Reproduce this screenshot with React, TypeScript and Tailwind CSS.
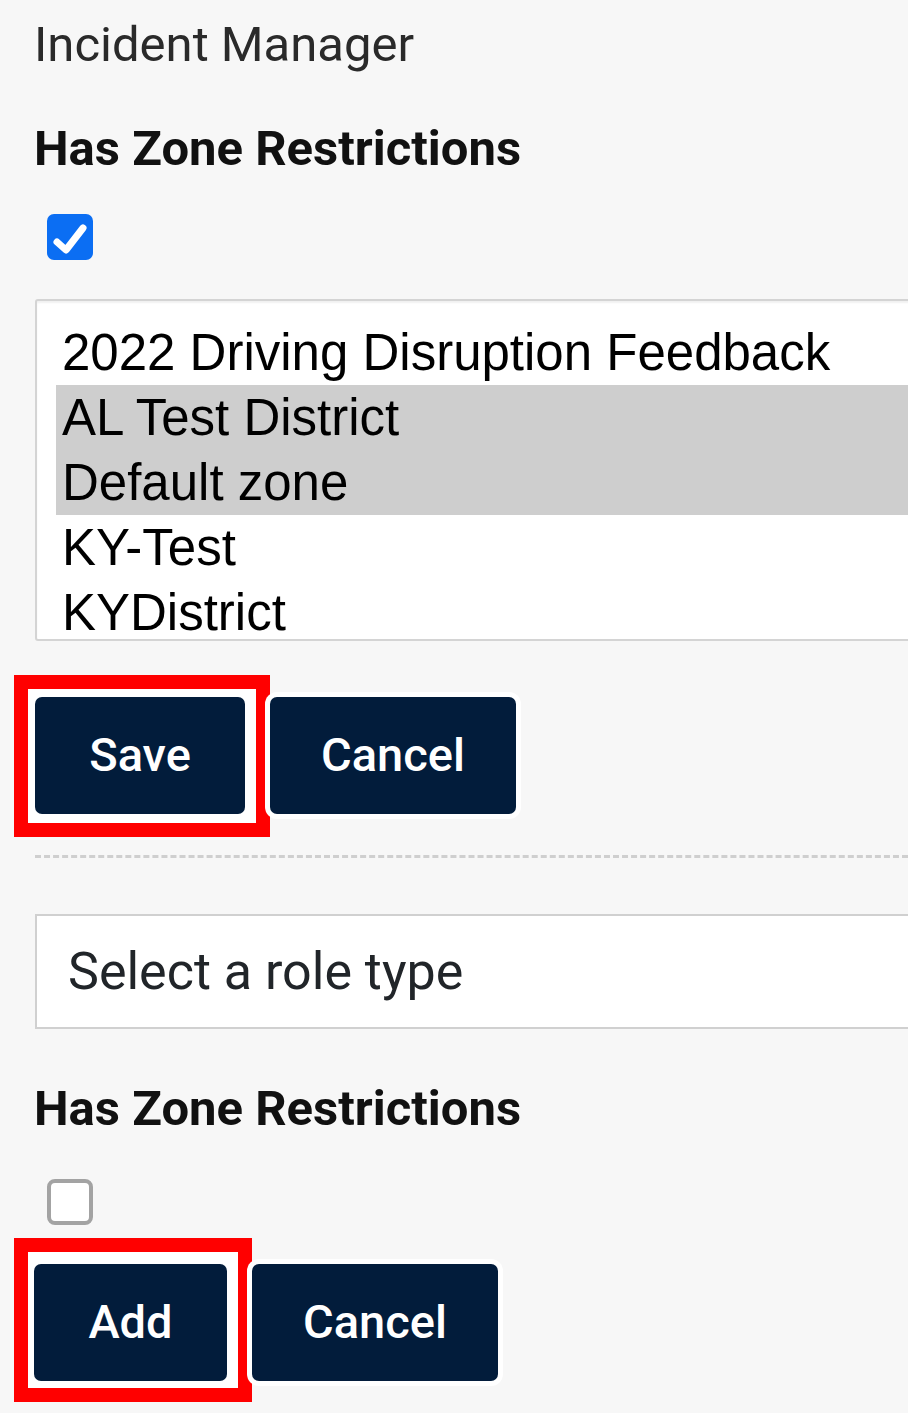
import React from "react";

const zones = [
  { name: "2022 Driving Disruption Feedback", selected: false },
  { name: "AL Test District", selected: true },
  { name: "Default zone", selected: true },
  { name: "KY-Test", selected: false },
  { name: "KYDistrict", selected: false },
];

function Checkbox({ checked, className }: { checked: boolean; className: string }) {
  if (checked) {
    return (
      <div className={`w-[46px] h-[46px] rounded-[7px] bg-[#0b6ef3] ${className}`}>
        <svg viewBox="0 0 46 46" className="w-full h-full">
          <polyline points="10,28 19,36 36,14" fill="none" stroke="#ffffff" strokeWidth="7" strokeLinecap="round" strokeLinejoin="round" />
        </svg>
      </div>
    );
  }
  return <div className={`w-[46px] h-[46px] rounded-[8px] bg-white border-[4px] border-[#a3a3a3] ${className}`} />;
}

function NavyButton({ label, width }: { label: string; width: string }) {
  return (
    <button
      className={`relative z-10 ${width} h-[117px] rounded-[7px] bg-[#021c3b] text-white text-[47px] font-medium flex items-center justify-center shadow-[0_0_0_5px_#ffffff]`}
    >
      {label}
    </button>
  );
}

function Marked({ children, box }: { children: React.ReactNode; box: string }) {
  // red annotation drawn round the primary button
  return (
    <div className="relative">
      <div className={`absolute ${box} border-[14px] border-[#ff0000] bg-white`} />
      {children}
    </div>
  );
}

export default function App() {
  return (
    <div className="h-[1413px] bg-[#f7f7f7] overflow-hidden pl-[34px] pt-[16px] font-['Roboto',sans-serif]">
      <div className="text-[49px] leading-[57px] text-[#2a2a2a]">Incident Manager</div>
      <div className="mt-[47px] text-[49px] leading-[57px] font-bold text-[#111111]">Has Zone Restrictions</div>
      <Checkbox checked className="mt-[37px] ml-[13px]" />

      <div className="mt-[39px] ml-[1px] w-[1000px] h-[342px] overflow-hidden bg-white border-2 border-[#d4d4d4] rounded-[3px] pl-[19px] pt-[19px] shadow-[inset_0_2px_2px_rgba(0,0,0,0.06)]">
        {zones.map((z) => (
          <div
            key={z.name}
            className={`h-[65px] leading-[65px] pl-[6px] text-[51px] text-black font-['Liberation_Sans',Arial,sans-serif] ${z.selected ? "bg-[#cecece]" : ""}`}
          >
            {z.name}
          </div>
        ))}
      </div>

      <div className="mt-[56px] ml-[1px] flex gap-[25px]">
        <Marked box="-left-[21px] -top-[22px] -right-[25px] -bottom-[23px]">
          <NavyButton label="Save" width="w-[210px]" />
        </Marked>
        <NavyButton label="Cancel" width="w-[246px]" />
      </div>

      <div className="mt-[41px] ml-[1px] border-t-[3px] border-dashed border-[#cfcfcf]" />

      <div className="mt-[56px] ml-[1px] w-[1000px] h-[115px] bg-white border-2 border-[#d0d0d0] flex items-center pl-[31px] text-[52px] text-[#212529]">
        Select a role type
      </div>

      <div className="mt-[51px] text-[49px] leading-[57px] font-bold text-[#111111]">Has Zone Restrictions</div>
      <Checkbox checked={false} className="mt-[42px] ml-[13px]" />

      <div className="mt-[39px] flex gap-[25px]">
        <Marked box="-left-[20px] -top-[26px] -right-[25px] -bottom-[21px]">
          <NavyButton label="Add" width="w-[193px]" />
        </Marked>
        <NavyButton label="Cancel" width="w-[246px]" />
      </div>
    </div>
  );
}
